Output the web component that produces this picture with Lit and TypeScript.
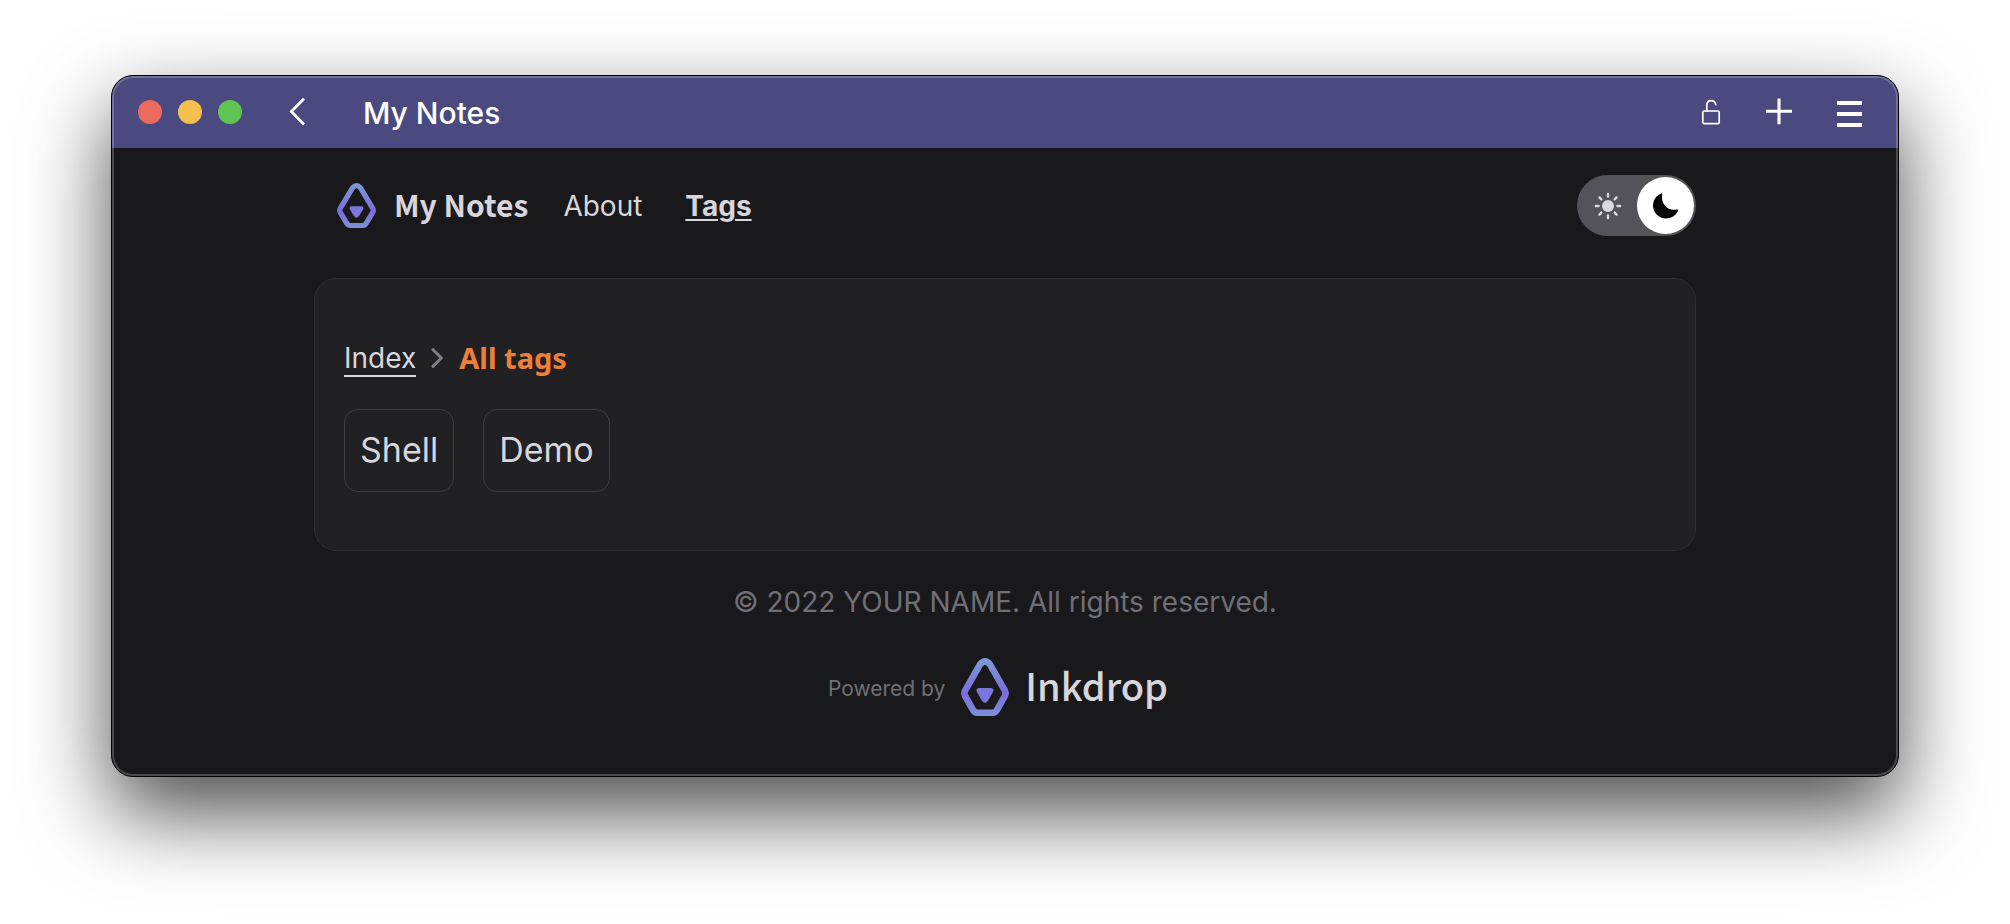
import { LitElement, html, css, svg } from "lit";
import { customElement, property, state } from "lit/decorators.js";

@customElement("ink-logo")
class InkLogo extends LitElement {
  static styles = css`
    :host {
      display: block;
      flex: none;
    }
    svg {
      display: block;
      width: 100%;
      height: 100%;
    }
  `;

  render() {
    return html`<svg viewBox="0 0 48 58" preserveAspectRatio="none" aria-hidden="true">
      <defs>
        <linearGradient id="ink" gradientUnits="userSpaceOnUse" x1="0" y1="0" x2="0" y2="58">
          <stop offset="0" stop-color="#7c9bd4" />
          <stop offset="0.62" stop-color="#7b6cdd" />
          <stop offset="1" stop-color="#7a92d6" />
        </linearGradient>
      </defs>
      <path
        fill="none"
        stroke="url(#ink)"
        stroke-width="6.6"
        stroke-linejoin="round"
        d="M19.2 6.2Q24 .6 28.8 6.2L43.9 32.6Q45.4 35.3 43.9 38L36 51.8Q34.4 54.7 31.6 54.7H16.4Q13.6 54.7 12 51.8L4.1 38Q2.6 35.3 4.1 32.6Z"
      />
      <path
        fill="#7b76dc"
        d="M18.2 30H29.8Q33.8 30.4 32 34L27.4 42.2Q24 47.4 20.6 42.2L16 34Q14.2 30.4 18.2 30Z"
      />
    </svg>`;
  }
}

@customElement("title-bar")
class TitleBar extends LitElement {
  @property() heading = "";

  static styles = css`
    :host {
      display: flex;
      align-items: center;
      height: 72px;
      padding: 0 36px 0 26px;
      background: #4b4a80;
      color: #fff;
      font-family: Inter, "Liberation Sans", sans-serif;
    }
    button {
      display: block;
      padding: 0;
      border: 0;
      background: none;
      color: inherit;
      cursor: pointer;
    }
    svg {
      display: block;
    }
    .lights {
      display: flex;
      gap: 16px;
    }
    .light {
      width: 24px;
      height: 24px;
      border-radius: 50%;
    }
    .close {
      background: #ed6a5e;
    }
    .minimize {
      background: #f5bf4f;
    }
    .zoom {
      background: #61c554;
    }
    .back {
      margin-left: 45px;
    }
    .title {
      flex: 1;
      margin: 0 0 0 56px;
      padding-top: 2px;
      font-size: 30px;
      line-height: 36px;
      font-weight: 500;
    }
    .tools {
      display: flex;
      align-items: center;
      gap: 44px;
    }
  `;

  render() {
    return html`
      <div class="lights">
        <button class="light close" aria-label="Close"></button>
        <button class="light minimize" aria-label="Minimize"></button>
        <button class="light zoom" aria-label="Zoom"></button>
      </div>
      <button class="back" aria-label="Back">
        <svg width="20" height="30" viewBox="0 0 20 30">
          <path d="M17 1.8L4.4 14.6L17 27.4" fill="none" stroke="currentColor" stroke-width="2.8" />
        </svg>
      </button>
      <h1 class="title">${this.heading}</h1>
      <div class="tools">
        <button aria-label="Unlock">
          <svg width="20" height="26" viewBox="0 0 20 26">
            <g fill="none" stroke="currentColor" stroke-width="1.7">
              <rect x="1.8" y="12" width="16.4" height="12.6" rx="1.4" />
              <path d="M5.8 12V6.4Q5.8 1.6 10 1.6Q14 1.6 14.8 5.6" stroke-linecap="round" />
            </g>
          </svg>
        </button>
        <button aria-label="New page">
          <svg width="28" height="28" viewBox="0 0 28 28">
            <path d="M14 .4V26.2M1 13.3H27" stroke="currentColor" stroke-width="3.1" />
          </svg>
        </button>
        <button aria-label="Menu">
          <svg width="25" height="30" viewBox="0 0 25 30">
            <path d="M0 6H25M0 17H25M0 28H25" stroke="currentColor" stroke-width="3.8" />
          </svg>
        </button>
      </div>
    `;
  }
}

@customElement("theme-switch")
class ThemeSwitch extends LitElement {
  @state() private dark = true;

  static styles = css`
    :host {
      display: block;
    }
    .track {
      display: flex;
      align-items: center;
      width: 119px;
      height: 61px;
      box-sizing: border-box;
      padding: 2px;
      border: 0;
      border-radius: 31px;
      background: #54535a;
      color: #d9d8de;
      cursor: pointer;
    }
    .slot {
      display: grid;
      place-items: center;
      width: 57px;
      height: 57px;
      border-radius: 50%;
    }
    .slot + .slot {
      margin-left: 1px;
    }
    .on {
      background: #fff;
      color: #000;
    }
  `;

  render() {
    const rays = [0, 45, 90, 135, 180, 225, 270, 315].map(
      (a) => svg`<path d="M14 1.9V4.6" transform="rotate(${a} 14 14)" />`,
    );
    return html`<button
      class="track"
      role="switch"
      aria-label="Dark theme"
      aria-checked=${this.dark}
      @click=${() => (this.dark = !this.dark)}
    >
      <span class="slot ${this.dark ? "" : "on"}">
        <svg width="28" height="28" viewBox="0 0 28 28">
          <circle cx="14" cy="14" r="6" fill="currentColor" />
          <g stroke="currentColor" stroke-width="2.4" stroke-linecap="round">${rays}</g>
        </svg>
      </span>
      <span class="slot ${this.dark ? "on" : ""}">
        <svg width="28" height="28" viewBox="0 0 28 28">
          <path
            fill="currentColor"
            d="M9.2 1.4C9.9 1 10.4 1.4 10.2 2.4C8.6 11.6 15.4 19.2 24.8 17.6C25.9 17.4 26.5 18 25.9 19.1C23.6 23.8 19.2 26.6 14.2 26.6C7 26.6 1 20.8 1 13.6C1 8.2 4.2 3.4 9.2 1.4Z"
          />
        </svg>
      </span>
    </button>`;
  }
}

@customElement("app-root")
class AppRoot extends LitElement {
  private tags = ["Shell", "Demo"];

  static styles = css`
    :host {
      display: block;
      min-height: 100vh;
      box-sizing: border-box;
      padding: 75px 111px 0;
      background: #fff;
      color: #d7d6dc;
      font-family: Inter, "Liberation Sans", sans-serif;
      font-size: 28px;
      line-height: 36px;
      overflow: hidden;
    }
    a {
      color: inherit;
      text-decoration: none;
    }
    .window {
      position: relative;
      border: 1px solid #000;
      border-radius: 22px;
      background: #19191b;
      overflow: hidden;
      box-shadow: 0 36px 84px rgba(0, 0, 0, 0.7);
    }
    .window::after {
      content: "";
      position: absolute;
      inset: 0;
      border-radius: 21px;
      box-shadow: inset 0 0 0 2px rgba(255, 255, 255, 0.22);
      pointer-events: none;
    }
    .page {
      max-width: 1382px;
      margin: 0 auto;
      padding: 27px 24px 60px;
    }
    .head {
      display: flex;
      align-items: center;
      justify-content: space-between;
      padding-left: 23px;
    }
    .nav {
      display: flex;
      align-items: center;
    }
    .brand {
      display: flex;
      align-items: center;
      gap: 18px;
      font-family: "Noto Sans CJK JP", "Noto Sans", sans-serif;
      font-size: 30px;
      font-weight: 700;
    }
    .wordmark {
      padding-bottom: 4px;
    }
    .brand ink-logo {
      width: 39px;
      height: 45px;
    }
    .about {
      margin-left: 35px;
    }
    .current {
      margin-left: 43px;
      font-weight: 700;
      text-decoration: underline;
      text-decoration-thickness: 2px;
      text-underline-offset: 3px;
    }
    .card {
      margin-top: 42px;
      padding: 60px 29px 58px;
      border: 1px solid #2f2f32;
      border-radius: 22px;
      background: #212123;
    }
    .crumbs {
      display: flex;
      align-items: center;
    }
    .index {
      padding-top: 3px;
      border-bottom: 2px solid currentColor;
      line-height: 33px;
    }
    .sep {
      margin: 0 15px;
      color: #7e7d82;
    }
    .here {
      margin: 0;
      color: #ee7f38;
      font-family: "Noto Sans", sans-serif;
      font-size: 29px;
      line-height: 36px;
      font-weight: 700;
    }
    .tags {
      display: flex;
      gap: 29px;
      margin: 32px 0 0;
      padding: 0;
      list-style: none;
    }
    .tag {
      display: block;
      padding: 18px 15px 19px;
      border: 1px solid #3e3e42;
      border-radius: 14px;
      font-size: 34px;
      line-height: 44px;
    }
    .foot {
      margin-top: 33px;
      text-align: center;
      color: #706f78;
    }
    .foot p {
      margin: 0;
    }
    .powered {
      display: flex;
      align-items: center;
      justify-content: center;
      margin-top: 38px;
      padding-right: 14px;
      color: #707072;
      font-size: 21px;
    }
    .maker {
      padding-top: 4px;
    }
    .product {
      display: flex;
      align-items: center;
      gap: 16px;
      margin-left: 16px;
      color: #d7d6dc;
      font-family: "Noto Sans CJK JP", "Noto Sans", sans-serif;
      font-size: 38px;
      line-height: 52px;
      font-weight: 500;
    }
    .product ink-logo {
      width: 48px;
      height: 58px;
    }
  `;

  render() {
    return html`<div class="window">
      <title-bar heading="My Notes"></title-bar>
      <div class="page">
        <header class="head">
          <nav class="nav">
            <a class="brand" href="#"><ink-logo></ink-logo><span class="wordmark">My Notes</span></a>
            <a class="about" href="#about">About</a>
            <a class="current" href="#tags" aria-current="page">Tags</a>
          </nav>
          <theme-switch></theme-switch>
        </header>
        <main class="card">
          <nav class="crumbs">
            <a class="index" href="#">Index</a>
            <svg class="sep" width="13" height="22" viewBox="0 0 13 22" aria-hidden="true">
              <path
                d="M2 2.6L10.4 11L2 19.4"
                fill="none"
                stroke="currentColor"
                stroke-width="3"
                stroke-linecap="round"
                stroke-linejoin="round"
              />
            </svg>
            <h2 class="here">All tags</h2>
          </nav>
          <ul class="tags">
            ${this.tags.map(
              (t) => html`<li><a class="tag" href="#${t.toLowerCase()}">${t}</a></li>`,
            )}
          </ul>
        </main>
        <footer class="foot">
          <p>© 2022 YOUR NAME. All rights reserved.</p>
          <div class="powered">
            <span class="maker">Powered by</span>
            <a class="product" href="#inkdrop"
              ><ink-logo></ink-logo><span class="wordmark">Inkdrop</span></a
            >
          </div>
        </footer>
      </div>
    </div>`;
  }
}
